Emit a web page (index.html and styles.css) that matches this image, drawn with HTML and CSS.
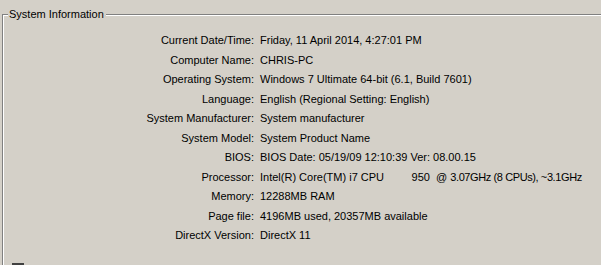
FILE: index.html
```html
<!DOCTYPE html>
<html lang="en">
<head>
  <meta charset="UTF-8">
  <title>System Information</title>
  <link rel="stylesheet" href="styles.css">
</head>
<body>
<fieldset class="group">
  <legend>System Information</legend>
  <div class="info">
    <span class="label">Current Date/Time:</span><span class="value">Friday, 11 April 2014, 4:27:01 PM</span>
    <span class="label">Computer Name:</span><span class="value">CHRIS-PC</span>
    <span class="label">Operating System:</span><span class="value">Windows 7 Ultimate 64-bit (6.1, Build 7601)</span>
    <span class="label">Language:</span><span class="value">English (Regional Setting: English)</span>
    <span class="label">System Manufacturer:</span><span class="value">System manufacturer</span>
    <span class="label">System Model:</span><span class="value">System Product Name</span>
    <span class="label">BIOS:</span><span class="value">BIOS Date: 05/19/09 12:10:39 Ver: 08.00.15</span>
    <span class="label">Processor:</span><span class="value">Intel(R) Core(TM) i7 CPU         950  @ <span class="tight">3.07GHz (8 CPUs), ~3.1GHz</span></span>
    <span class="label">Memory:</span><span class="value">12288MB RAM</span>
    <span class="label">Page file:</span><span class="value">4196MB used, 20357MB available</span>
    <span class="label">DirectX Version:</span><span class="value">DirectX 11</span>
  </div>
  <div class="check"></div>
</fieldset>
</body>
</html>
```

FILE: styles.css
```css
html, body{
  margin: 0;
  height: 100%;
  overflow: hidden;
  background: #d4d0c8;
}
body{
  font-family: "Liberation Sans", Arial, sans-serif;
  font-size: 11px;
  color: #000;
}
/* group box runs off the right and bottom edges */
.group{
  margin: 8px 0 0 2px;
  padding: 10px 0 0 0;
  border: 1px solid #808080;
  border-right: none;
  border-bottom: none;
  box-shadow: inset 1px 1px 0 #fff;
  height: 257px;
  box-sizing: border-box;
}
.group legend{
  margin-left: 5px;
  padding: 0 2px 0 1px;
  background: #d4d0c8;
  line-height: 13px;
}
.info{
  display: grid;
  grid-template-columns: 251px auto;
  column-gap: 6px;
  justify-content: start;
}
.label{
  text-align: right;
  line-height: 19.5px;
}
.value{
  line-height: 19.5px;
  white-space: pre;
}
.tight{
  letter-spacing: -0.4px;
}
.check{
  width: 12px;
  height: 3px;
  margin: 17px 0 0 9px;
  background: #404040;
}
```
